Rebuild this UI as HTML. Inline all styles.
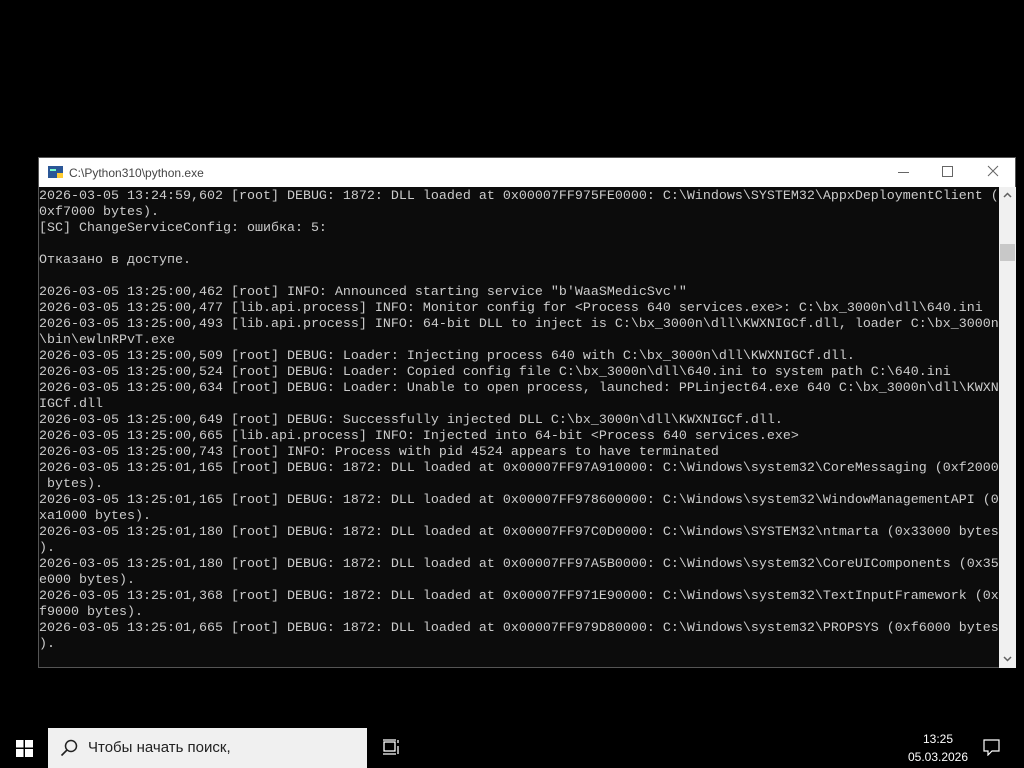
<!DOCTYPE html>
<html><head><meta charset="utf-8"><style>
body{margin:0;width:1024px;height:768px;background:#000;position:relative;overflow:hidden;font-family:"Liberation Sans",sans-serif}
.win{position:absolute;left:38px;top:157px;width:978px;height:511px;background:#0c0c0c;border:1px solid #555;box-sizing:border-box}
.title{position:absolute;left:0;top:0;width:976px;height:29px;background:#fff;color:#444;font-size:12px}
.title span{position:absolute;left:30px;top:8px}
.con{position:absolute;left:0;top:31px;width:960px;height:479px;overflow:hidden}
pre{margin:0;font-family:"Liberation Mono",monospace;font-size:13.33px;line-height:16px;color:#cccccc;white-space:pre}
.sb{position:absolute;left:960px;top:29px;width:17px;height:481px;background:#f0f0f0}
.tb{position:absolute;left:0;top:720px;width:1024px;height:48px;background:#000}
.search{position:absolute;left:48px;top:8px;width:319px;height:40px;background:#f0f0f0;color:#222;font-size:15px}
</style></head><body>
<div class="win">
<div class="title">
<svg style="position:absolute;left:9px;top:7px" width="16" height="14"><rect x="0" y="1" width="15" height="12" fill="#2b5797"/><rect x="2" y="4" width="6" height="2" fill="#7fc"/><rect x="9" y="8" width="6" height="5" fill="#fc3"/></svg>
<span>C:\Python310\python.exe</span>
<div style="position:absolute;left:859px;top:14px;width:11px;height:1px;background:#666"></div>
<div style="position:absolute;left:903px;top:8px;width:9px;height:9px;border:1px solid #666"></div>
<svg style="position:absolute;left:948px;top:7px" width="12" height="12"><path d="M1 1L11 11M11 1L1 11" stroke="#666" stroke-width="1"/></svg>
</div>
<div class="con"><pre style="margin-top:0">2026-03-05 13:24:59,602 [root] DEBUG: 1872: DLL loaded at 0x00007FF975FE0000: C:\Windows\SYSTEM32\AppxDeploymentClient (
0xf7000 bytes).
[SC] ChangeServiceConfig: ошибка: 5:

Отказано в доступе.

2026-03-05 13:25:00,462 [root] INFO: Announced starting service "b'WaaSMedicSvc'"
2026-03-05 13:25:00,477 [lib.api.process] INFO: Monitor config for &lt;Process 640 services.exe&gt;: C:\bx_3000n\dll\640.ini
2026-03-05 13:25:00,493 [lib.api.process] INFO: 64-bit DLL to inject is C:\bx_3000n\dll\KWXNIGCf.dll, loader C:\bx_3000n
\bin\ewlnRPvT.exe
2026-03-05 13:25:00,509 [root] DEBUG: Loader: Injecting process 640 with C:\bx_3000n\dll\KWXNIGCf.dll.
2026-03-05 13:25:00,524 [root] DEBUG: Loader: Copied config file C:\bx_3000n\dll\640.ini to system path C:\640.ini
2026-03-05 13:25:00,634 [root] DEBUG: Loader: Unable to open process, launched: PPLinject64.exe 640 C:\bx_3000n\dll\KWXN
IGCf.dll
2026-03-05 13:25:00,649 [root] DEBUG: Successfully injected DLL C:\bx_3000n\dll\KWXNIGCf.dll.
2026-03-05 13:25:00,665 [lib.api.process] INFO: Injected into 64-bit &lt;Process 640 services.exe&gt;
2026-03-05 13:25:00,743 [root] INFO: Process with pid 4524 appears to have terminated
2026-03-05 13:25:01,165 [root] DEBUG: 1872: DLL loaded at 0x00007FF97A910000: C:\Windows\system32\CoreMessaging (0xf2000
 bytes).
2026-03-05 13:25:01,165 [root] DEBUG: 1872: DLL loaded at 0x00007FF978600000: C:\Windows\system32\WindowManagementAPI (0
xa1000 bytes).
2026-03-05 13:25:01,180 [root] DEBUG: 1872: DLL loaded at 0x00007FF97C0D0000: C:\Windows\SYSTEM32\ntmarta (0x33000 bytes
).
2026-03-05 13:25:01,180 [root] DEBUG: 1872: DLL loaded at 0x00007FF97A5B0000: C:\Windows\system32\CoreUIComponents (0x35
e000 bytes).
2026-03-05 13:25:01,368 [root] DEBUG: 1872: DLL loaded at 0x00007FF971E90000: C:\Windows\system32\TextInputFramework (0x
f9000 bytes).
2026-03-05 13:25:01,665 [root] DEBUG: 1872: DLL loaded at 0x00007FF979D80000: C:\Windows\system32\PROPSYS (0xf6000 bytes
).</pre></div>
<div class="sb">
<svg style="position:absolute;left:4px;top:5px" width="9" height="6"><path d="M1 5L4.5 1.5L8 5" stroke="#606060" stroke-width="1.5" fill="none"/></svg>
<div style="position:absolute;left:1px;top:57px;width:15px;height:17px;background:#c8c8c8"></div>
<svg style="position:absolute;left:4px;top:469px" width="9" height="6"><path d="M1 1L4.5 4.5L8 1" stroke="#606060" stroke-width="1.5" fill="none"/></svg>
</div>
</div>
<div class="tb">
<svg style="position:absolute;left:16px;top:20px" width="17" height="17"><rect x="0" y="0" width="7.5" height="7.5" fill="#fff"/><rect x="9" y="0" width="8" height="7.5" fill="#fff"/><rect x="0" y="9" width="7.5" height="8" fill="#fff"/><rect x="9" y="9" width="8" height="8" fill="#fff"/></svg>
<div class="search">
<svg style="position:absolute;left:12px;top:11px" width="18" height="18"><circle cx="11" cy="7" r="5.5" stroke="#222" stroke-width="1.5" fill="none"/><path d="M7 11L1.5 16.5" stroke="#222" stroke-width="1.6"/></svg>
<span style="position:absolute;left:40px;top:11px">Чтобы начать поиск,</span>
</div>
<svg style="position:absolute;left:383px;top:19px" width="18" height="16"><rect x="1" y="3" width="11" height="9" stroke="#fff" fill="none" stroke-width="1.3"/><path d="M0 1H13M0 15H13M15 1V4M15 7V15" stroke="#fff" stroke-width="1.3"/></svg>
<div style="position:absolute;left:900px;top:10px;width:76px;text-align:center;color:#fff;font-size:12px;line-height:18px">13:25<br>05.03.2026</div>
<svg style="position:absolute;left:983px;top:19px" width="17" height="17"><path d="M1 1H16V12H9L5 16V12H1Z" stroke="#fff" stroke-width="1.2" fill="none"/></svg>
</div>
</body></html>
